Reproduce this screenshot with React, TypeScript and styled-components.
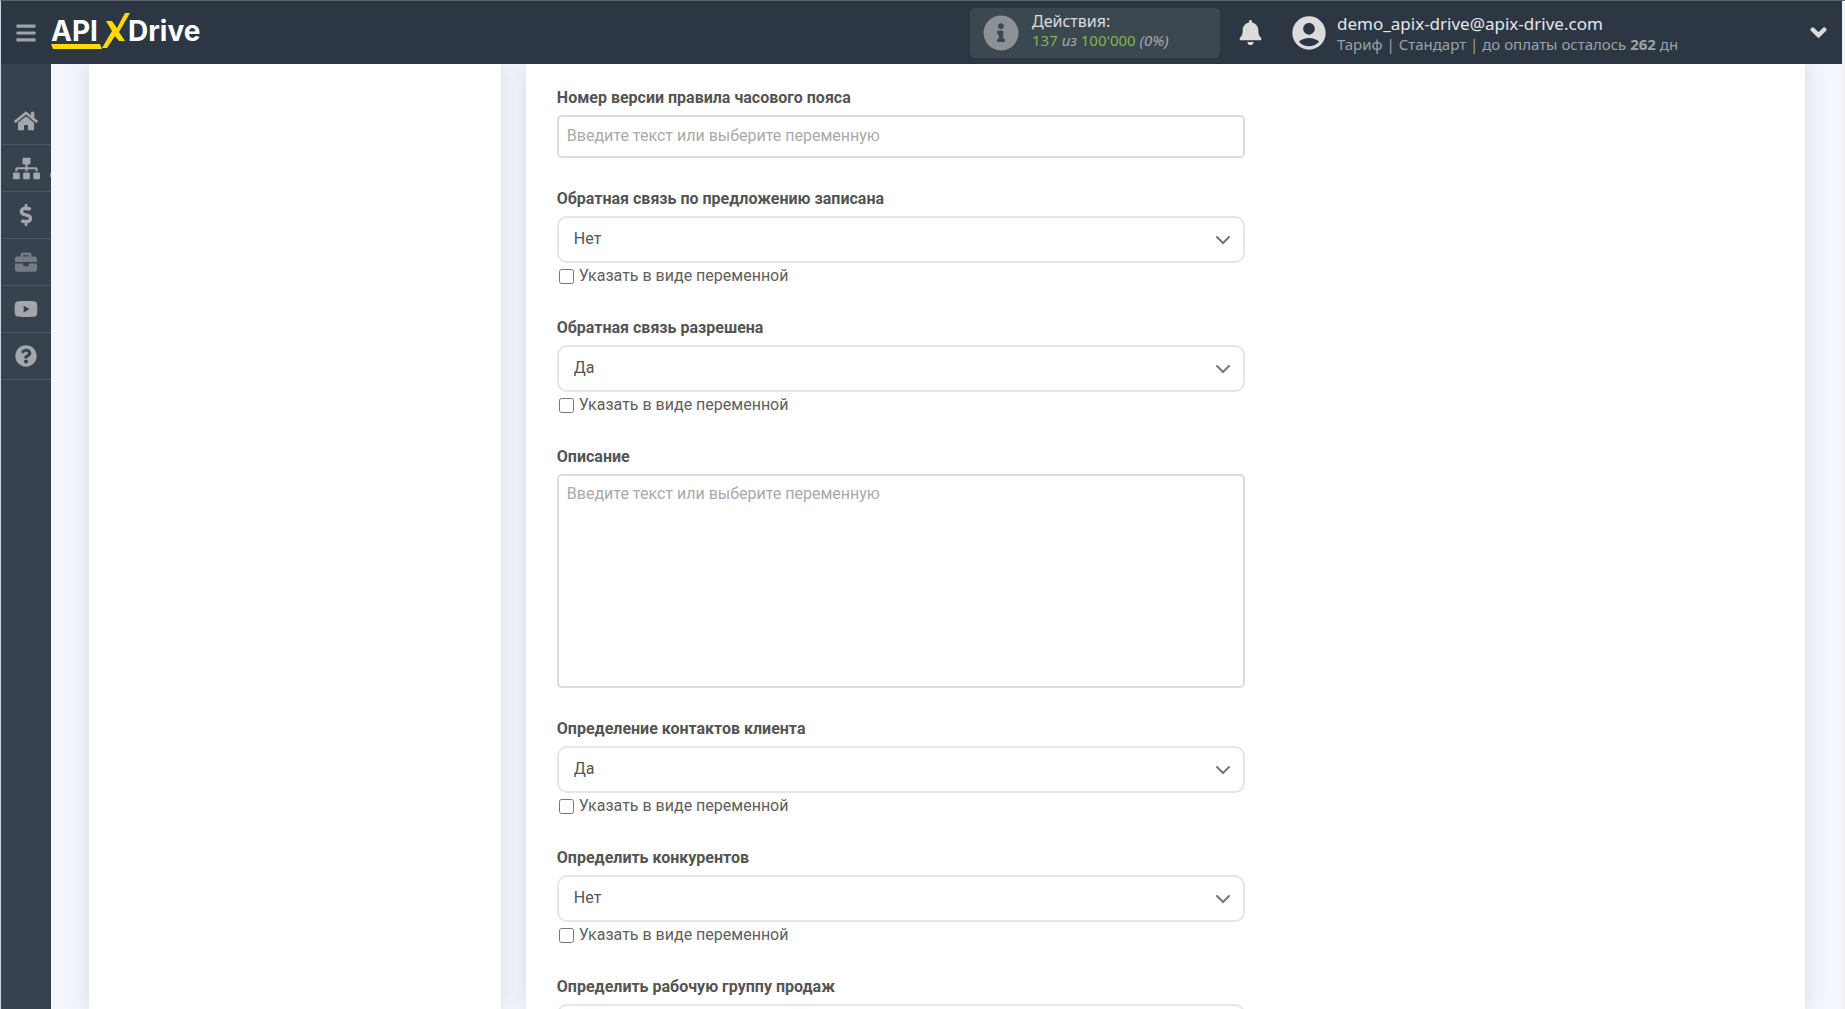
import React, { useId, useState } from 'react';
import styled, { createGlobalStyle } from 'styled-components';
import {
  FaBars,
  FaBell,
  FaBriefcase,
  FaChevronDown,
  FaDollarSign,
  FaHome,
  FaInfoCircle,
  FaQuestionCircle,
  FaSitemap,
  FaYoutube,
} from 'react-icons/fa';
import { MdAccountCircle } from 'react-icons/md';

const GlobalStyle = createGlobalStyle`
  *, *::before, *::after { box-sizing: border-box; }
  body {
    margin: 0;
    background: #f2f2f2;
    color: #555;
    font-family: Roboto, sans-serif;
    font-size: 16px;
    line-height: 24px;
  }
`;

const Page = styled.div`
  display: flex;
  flex-direction: column;
  height: 100vh;
  overflow: hidden;
  border-top: 1px solid #5d6367;
  border-left: 1px solid #c5d8dc;
  padding-right: 3px;
`;

const Header = styled.header`
  flex: none;
  display: flex;
  align-items: center;
  height: 63px;
  padding: 0 15px 0 14px;
  background: #2c3743;
  color: #dcdcdc;
  font-family: 'Noto Sans', sans-serif;
`;

const IconButton = styled.button`
  display: flex;
  align-items: center;
  justify-content: center;
  padding: 0;
  border: 0;
  background: none;
  color: inherit;
  cursor: pointer;
`;

const MenuButton = styled(IconButton)`
  font-size: 22px;
  color: #9fa4a9;
`;

const LogoLink = styled.a`
  display: flex;
  margin-left: 14px;
`;

const LogoText = styled.text`
  font-family: Inter, sans-serif;
  font-size: 28px;
  font-weight: 700;
  fill: #fff;
`;

const ActionsBox = styled.div`
  display: flex;
  align-items: center;
  gap: 13px;
  width: 250px;
  height: 50px;
  margin-left: auto;
  padding-left: 13px;
  border-radius: 5px;
  background: #3c4850;
`;

const InfoIcon = styled(FaInfoCircle)`
  flex: none;
  font-size: 36px;
  color: #8b9194;
`;

const Lines = styled.div`
  display: flex;
  flex-direction: column;
  white-space: nowrap;
`;

const ActionsTitle = styled.span`
  font-size: 16px;
  line-height: 18px;
`;

const ActionsCount = styled.span`
  padding-bottom: 4px;
  font-size: 15px;
  line-height: 20px;
  color: #7fb650;

  em { color: #a5a9ac; }
`;

const BellButton = styled(IconButton)`
  margin-left: 18px;
  font-size: 25px;
`;

const Account = styled.div`
  display: flex;
  align-items: center;
  gap: 8px;
  flex: 0 1 538px;
  margin-left: 26px;
`;

const Avatar = styled(MdAccountCircle)`
  flex: none;
  font-size: 40px;
`;

const Email = styled.span`
  font-size: 17px;
  line-height: 22px;
  color: #e6e6e6;
`;

const Plan = styled.span`
  font-size: 15px;
  line-height: 18px;
  color: #9da2a7;
`;

const ExpandButton = styled(IconButton)`
  margin-left: auto;
  font-size: 17px;

  path {
    stroke: currentColor;
    stroke-width: 50px;
  }
`;

const Body = styled.div`
  flex: 1;
  display: flex;
  min-height: 0;
`;

const Sidebar = styled.nav`
  flex: none;
  width: 50px;
  padding-top: 34px;
  background: #37424f;
`;

const SideLink = styled.a<{ $size: number; $dim?: boolean; $marked?: boolean }>`
  position: relative;
  display: flex;
  align-items: center;
  justify-content: center;
  height: 47px;
  border-bottom: 1px solid #4b5663;
  font-size: ${(p) => p.$size}px;
  color: ${(p) => (p.$dim ? '#747b83' : '#a3a7ac')};

  &::after {
    content: '';
    display: ${(p) => (p.$marked ? 'block' : 'none')};
    position: absolute;
    right: 0;
    top: 28px;
    width: 1px;
    height: 4px;
    background: #8b9299;
  }
`;

const Content = styled.main`
  flex: 1;
  display: flex;
  gap: 25px;
  min-width: 0;
  padding: 0 37px 0 38px;
  overflow: hidden;
  background: #f3f6fc;
`;

const Card = styled.section`
  background: #fff;
  box-shadow: 0 0 20px rgba(95, 100, 100, 0.18);
`;

const StepsCard = styled(Card)`
  flex: 0 0 24%;
`;

const FormCard = styled(Card)`
  flex: 1;
  min-width: 0;
  padding: 22px 31px;
`;

const Form = styled.form`
  display: flex;
  flex-direction: column;
  gap: 29px;
  max-width: 688px;
`;

const Field = styled.div`
  display: flex;
  flex-direction: column;
`;

const FieldLabel = styled.label`
  margin-bottom: 5px;
  font-weight: 700;
  color: #545454;
`;

const TextInput = styled.input`
  width: 100%;
  height: 43px;
  padding: 0 8px 2px;
  border: 2px solid #dcdcdc;
  border-radius: 5px;
  background: #fff;
  color: #555;
  font: inherit;

  &::placeholder { color: #aaa; opacity: 1; }
`;

const TextBox = styled.textarea`
  display: block;
  width: 100%;
  height: 214px;
  padding: 6px 8px;
  border: 2px solid #dcdcdc;
  border-radius: 5px;
  background: #fff;
  color: #555;
  font: inherit;
  resize: none;

  &::placeholder { color: #aaa; opacity: 1; }
`;

const SelectWrap = styled.div`
  position: relative;
`;

const Select = styled.select`
  display: block;
  width: 100%;
  height: 47px;
  padding: 0 40px 2px 15px;
  border: 2px solid #e6e6e6;
  border-radius: 10px;
  background: #fff;
  color: #555;
  font: inherit;
  appearance: none;
`;

const SelectArrow = styled.svg`
  position: absolute;
  right: 15px;
  top: 20px;
  pointer-events: none;
`;

const CheckLabel = styled.label`
  display: flex;
  align-items: center;
  gap: 5px;
  height: 24px;
  padding: 2px 0 0 2px;
  color: #606060;
`;

const Checkbox = styled.input`
  width: 15px;
  height: 15px;
  margin: 0;
`;

const PLACEHOLDER = 'Введите текст или выберите переменную';

function Logo() {
  return (
    <svg width="156" height="41" viewBox="0 0 156 41" role="img" aria-label="APIXDrive">
      <LogoText x="0" y="29">API</LogoText>
      <path d="M0 32h49l2 5H2z" fill="#ffd90a" />
      <path d="M55 9h6l5 7 8-15h5L68 20l6 9h-6l-4-5-8 12h-5l10-17z" fill="#ffd90a" />
      <LogoText x="77" y="29">Drive</LogoText>
    </svg>
  );
}

function InputField({ label }: { label: string }) {
  const id = useId();
  return (
    <Field>
      <FieldLabel htmlFor={id}>{label}</FieldLabel>
      <TextInput id={id} type="text" placeholder={PLACEHOLDER} />
    </Field>
  );
}

function TextField({ label }: { label: string }) {
  const id = useId();
  return (
    <Field>
      <FieldLabel htmlFor={id}>{label}</FieldLabel>
      <TextBox id={id} placeholder={PLACEHOLDER} />
    </Field>
  );
}

function YesNoField({ label, initial }: { label: string; initial: string }) {
  const id = useId();
  const [value, setValue] = useState(initial);
  return (
    <Field>
      <FieldLabel htmlFor={id}>{label}</FieldLabel>
      <SelectWrap>
        <Select id={id} value={value} onChange={(e) => setValue(e.target.value)}>
          <option>Да</option>
          <option>Нет</option>
        </Select>
        <SelectArrow width="14" height="9" viewBox="0 0 14 9" fill="none" stroke="#777" strokeWidth="2">
          <path d="M1 1l6 6 6-6" strokeLinecap="round" />
        </SelectArrow>
      </SelectWrap>
      <CheckLabel>
        <Checkbox type="checkbox" />
        Указать в виде переменной
      </CheckLabel>
    </Field>
  );
}

const LINKS = [
  { title: 'Главная', icon: <FaHome />, size: 24 },
  { title: 'Связи', icon: <FaSitemap />, size: 27, marked: true },
  { title: 'Оплата', icon: <FaDollarSign />, size: 22 },
  { title: 'Услуги', icon: <FaBriefcase />, size: 22, dim: true },
  { title: 'Видео', icon: <FaYoutube />, size: 24 },
  { title: 'Помощь', icon: <FaQuestionCircle />, size: 22 },
];

export default function App() {
  return (
    <>
      <GlobalStyle />
      <Page>
        <Header>
          <MenuButton type="button" aria-label="Меню"><FaBars /></MenuButton>
          <LogoLink href="#"><Logo /></LogoLink>
          <ActionsBox>
            <InfoIcon />
            <Lines>
              <ActionsTitle>Действия:</ActionsTitle>
              <ActionsCount>137 <em>из</em> 100'000 <em>(0%)</em></ActionsCount>
            </Lines>
          </ActionsBox>
          <BellButton type="button" aria-label="Уведомления"><FaBell /></BellButton>
          <Account>
            <Avatar />
            <Lines>
              <Email>demo_apix-drive@apix-drive.com</Email>
              <Plan>Тариф | Стандарт | до оплаты осталось <b>262</b> дн</Plan>
            </Lines>
            <ExpandButton type="button" aria-label="Профиль"><FaChevronDown /></ExpandButton>
          </Account>
        </Header>
        <Body>
          <Sidebar>
            {LINKS.map((l) => (
              <SideLink
                key={l.title}
                href="#"
                aria-label={l.title}
                $size={l.size}
                $dim={l.dim}
                $marked={l.marked}
              >
                {l.icon}
              </SideLink>
            ))}
          </Sidebar>
          <Content>
            <StepsCard />
            <FormCard>
              <Form>
                <InputField label="Номер версии правила часового пояса" />
                <YesNoField label="Обратная связь по предложению записана" initial="Нет" />
                <YesNoField label="Обратная связь разрешена" initial="Да" />
                <TextField label="Описание" />
                <YesNoField label="Определение контактов клиента" initial="Да" />
                <YesNoField label="Определить конкурентов" initial="Нет" />
                <YesNoField label="Определить рабочую группу продаж" initial="Нет" />
              </Form>
            </FormCard>
          </Content>
        </Body>
      </Page>
    </>
  );
}
